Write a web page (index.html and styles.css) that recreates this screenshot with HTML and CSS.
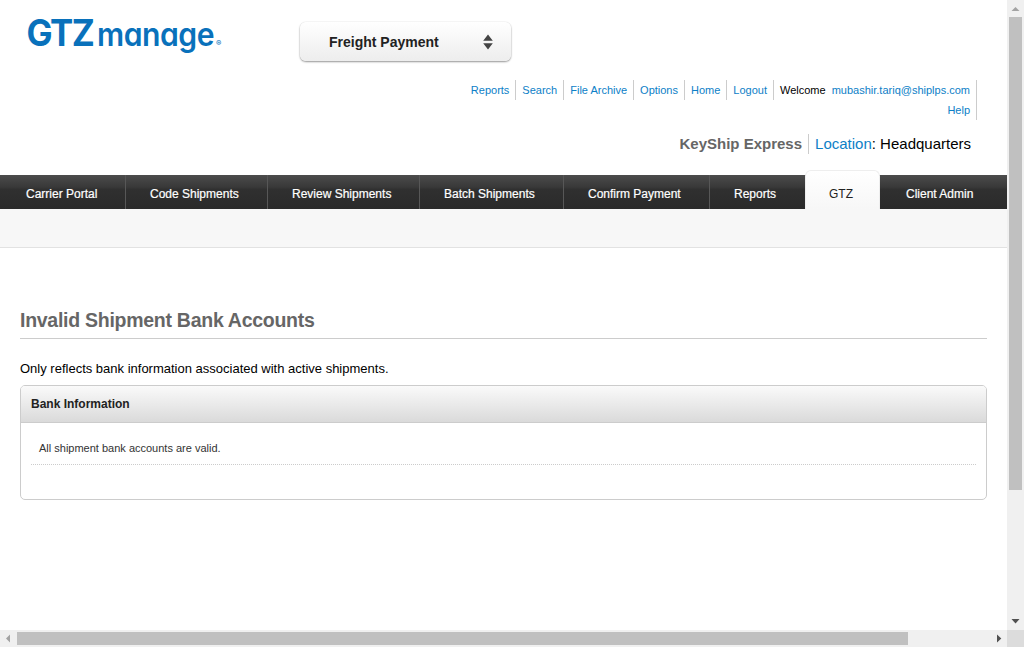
FILE: index.html
```html
<!DOCTYPE html>
<html lang="en">
<head>
<meta charset="utf-8">
<title>GTZmanage</title>
<link rel="stylesheet" href="styles.css">
</head>
<body>
<div class="window">
  <div class="page">
    <header class="header">
      <svg class="logo" width="210" height="50" viewBox="20 10 210 50">
        <text class="logo-main" x="26.500" y="45.600" textLength="67" lengthAdjust="spacingAndGlyphs">GTZ</text>
        <text class="logo-sub" x="97" y="45.900" textLength="117" lengthAdjust="spacingAndGlyphs">manage</text>
        <text class="logo-mark" x="216" y="45.600">®</text>
      </svg>
      <div class="module">
        <span class="module-name">Freight Payment</span>
        <svg class="module-arrows" width="10" height="16" viewBox="0 0 10 16"><path d="M5 0.500L9.800 6.800H0.200ZM5 15.500L9.800 9.200H0.200Z"/></svg>
      </div>
    </header>
    <div class="account">
      <div class="links">
        <a class="link">Reports</a><a class="link">Search</a><a class="link">File Archive</a><a class="link">Options</a><a class="link">Home</a><a class="link">Logout</a><span class="link"><b class="welcome">Welcome</b><a>mubashir.tariq@shiplps.com</a></span>
      </div>
      <a class="help">Help</a>
    </div>
    <div class="company">
      <span class="company-name">KeyShip Express</span>
      <span class="location"><a>Location</a>: <b>Headquarters</b></span>
    </div>
    <nav class="nav">
      <a class="tab">Carrier Portal</a><a class="tab">Code Shipments</a><a class="tab">Review Shipments</a><a class="tab">Batch Shipments</a><a class="tab">Confirm Payment</a><a class="tab">Reports</a><a class="tab active">GTZ</a><a class="tab">Client Admin</a>
    </nav>
    <div class="subnav"></div>
    <main class="content">
      <h1 class="title">Invalid Shipment Bank Accounts</h1>
      <p class="note">Only reflects bank information associated with active shipments.</p>
      <section class="panel">
        <h2 class="panel-head">Bank Information</h2>
        <div class="panel-body"><p class="row">All shipment bank accounts are valid.</p></div>
      </section>
    </main>
  </div>
  <div class="vbar">
    <svg class="faded" width="17" height="17"><path d="M4.500 11H12.500L8.500 7Z"/></svg>
    <div class="vthumb"></div>
    <svg class="vend" width="17" height="17"><path d="M4.500 6H12.500L8.500 10.500Z"/></svg>
  </div>
  <div class="hbar">
    <svg class="faded" width="17" height="17"><path d="M10 4.500V12.500L6 8.500Z"/></svg>
    <div class="hthumb"></div>
    <svg class="hend" width="17" height="17"><path d="M7 4.500V12.500L11.300 8.500Z"/></svg>
  </div>
  <div class="corner"></div>
</div>
</body>
</html>
```
FILE: styles.css
```css
* { box-sizing: border-box; }
body { margin: 0; overflow: hidden; font-family: "Liberation Sans", Arial, sans-serif; color: #000; background: #fff; }
.window { display: grid; grid-template-columns: 1007px 17px; grid-template-rows: 630px 17px; width: 1024px; height: 647px; }
.page { overflow: hidden; display: flex; flex-direction: column; }
a { color: #0d80c7; }
b { font-weight: normal; }
svg { display: block; }

.header { display: flex; height: 80px; padding: 10px 0 0 20px; }
.logo { fill: #0971bb; font-family: Inter, Lato, sans-serif; font-weight: 700; flex: none; }
.logo-main { font-size: 36.500px; font-weight: 700; letter-spacing: -1.500px; }
.logo-sub { font-size: 32px; font-weight: 600; letter-spacing: -0.500px; font-feature-settings: "cv11" 1; }
.logo-mark { font-size: 8px; font-weight: 500; }
.module { display: flex; align-items: center; justify-content: space-between; width: 211px; height: 39px; margin: 12px 0 0 70px; padding: 1px 18px 0 29px; border-radius: 6px; background: linear-gradient(#fff, #ededed); box-shadow: 0 1px 2px rgba(0,0,0,.4), 0 0 1px rgba(0,0,0,.2); }
.module-name { font-size: 14px; font-weight: bold; color: #222; }
.module-arrows { fill: #444; }

.account { height: 40px; padding-right: 30px; font-size: 11px; line-height: 20px; text-align: right; }
.links { display: flex; justify-content: flex-end; height: 20px; }
.link { padding: 0 6px; border-right: 1px solid #ccc; white-space: nowrap; }
.welcome { margin-right: 6px; }
.help { display: block; height: 20px; padding-right: 6px; border-right: 1px solid #ccc; }
.company { display: flex; justify-content: flex-end; height: 55px; padding: 14px 36px 0 0; font-size: 15px; line-height: 20px; }
.company-name { height: 20px; padding-right: 6px; border-right: 1px solid #ccc; color: #666; font-weight: bold; }
.location { padding-left: 6px; }

.nav { display: grid; grid-template-columns: 126px 142px 152px 144px 146px 95px 75px 127px; height: 34px; background: linear-gradient(#4c4c4c, #383838 36%, #303030 42%, #2a2a2a); }
.tab { padding-left: 24px; border-right: 1px solid #575757; color: #fff; font-size: 12px; line-height: 38px; white-space: nowrap; -webkit-text-stroke: 0.2px; }
.tab:first-child, .tab:last-child { padding-left: 26px; }
.tab:nth-child(n+6) { border-right: 0; }
.tab.active { height: 39px; margin-top: -5px; padding-left: 23px; line-height: 46px; border: 1px solid #eee; border-bottom: 0; border-radius: 6px 6px 0 0; color: #222; background: linear-gradient(#fff, #f7f7f7); -webkit-text-stroke: 0; }
.subnav { height: 39px; background: #f7f7f7; border-bottom: 1px solid #e2e2e2; }

.content { padding: 60px 20px 0; }
.title { height: 31px; margin: 0; border-bottom: 1px solid #ccc; color: #666; font-size: 19.500px; letter-spacing: -0.270px; line-height: 25px; }
.note { margin: 20px 0 7px; font-size: 13px; line-height: 19px; }
.panel { height: 115px; border: 1px solid #ccc; border-radius: 5px; overflow: hidden; }
.panel-head { height: 37px; margin: 0; padding-left: 10px; border-bottom: 1px solid #ccc; background: linear-gradient(#fafafa, #dadada); color: #222; font-size: 12px; line-height: 36px; }
.panel-body { padding: 10px; }
.row { height: 32px; margin: 0; padding-left: 8px; border-bottom: 1px dotted #ccc; color: #333; font-size: 11px; line-height: 30px; }

.vbar { display: flex; flex-direction: column; background: #f0f0f0; fill: #505050; }
.vthumb { width: 13px; height: 473px; margin-left: 2px; background: #c0c0c0; }
.vend { margin-top: auto; }
.hbar { display: flex; background: #f0f0f0; fill: #505050; }
.hthumb { width: 891px; height: 13px; margin-top: 2px; background: #c0c0c0; }
.hend { margin-left: auto; }
.faded { fill: #a3a3a3; }
.corner { background: #dcdcdc; }
```
